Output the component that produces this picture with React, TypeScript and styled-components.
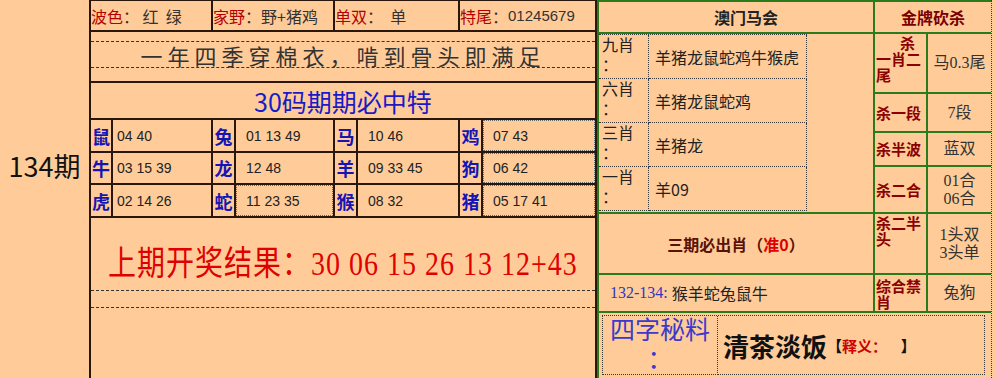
import React from "react";
import styled, { createGlobalStyle, css } from "styled-components";

// colours picked from the screenshot
const PEACH = "#ffcc99";
const LINE = "#2a160a";
const GREEN = "#2b7a1c";
const DOT = "#3a3a3a";

const GlobalStyle = createGlobalStyle`
  html, body {
    margin: 0;
    padding: 0;
    background: ${PEACH};
  }
  body {
    font-family: "Noto Sans CJK SC", "Liberation Sans", sans-serif;
  }
`;

const Page = styled.div`
  display: flex;
  width: 995px;
  height: 378px;
  overflow: hidden;
  background: ${PEACH};
`;

const IssueCol = styled.div`
  width: 89px;
  flex-shrink: 0;
  box-sizing: border-box;
  display: flex;
  align-items: center;
  justify-content: center;
  padding-bottom: 48px;
  font-size: 27px;
  color: #111;
`;

/* ---------- left table ---------- */

const LeftTable = styled.div`
  width: 508px;
  flex-shrink: 0;
  box-sizing: border-box;
  display: grid;
  grid-template-columns: 20px 98px 21px 97px 21px 100px 21px 112px;
  grid-template-rows: 29px 49px 35px 31px 30px 31px 1fr;
  gap: 2px;
  padding: 1px 2px 0 2px;
  background: ${LINE};
`;

const InfoCell = styled.div`
  grid-column: span 2;
  background: ${PEACH};
  display: flex;
  align-items: center;
  font-size: 16px;
  color: #333;
  white-space: pre;
`;

const InfoLabel = styled.span`
  color: #b30000;
`;

const Digits = styled.span`
  font-family: "Liberation Sans", sans-serif;
  font-size: 15px;
`;

const WideCell = styled.div`
  grid-column: 1 / -1;
  background: ${PEACH};
`;

const SloganBand = styled.div`
  margin-top: 9px;
  height: 25px;
  border-top: 1px dashed #333;
  border-bottom: 1px dashed #333;
  display: flex;
  align-items: center;
  justify-content: center;
  font-size: 22px;
  letter-spacing: 5px;
  color: #333;
`;

const TitleCell = styled(WideCell)`
  display: flex;
  align-items: center;
  justify-content: center;
  font-size: 25px;
  color: #1a1ac8;
`;

const Zodiac = styled.div`
  background: ${PEACH};
  display: flex;
  align-items: center;
  justify-content: center;
  font-size: 18px;
  font-weight: bold;
  color: #1515b5;
`;

const Nums = styled.div<{ $pad: number; $dotted?: boolean }>`
  background: ${PEACH};
  display: flex;
  align-items: center;
  padding-left: ${(p) => p.$pad}px;
  font-family: "Liberation Sans", sans-serif;
  font-size: 14px;
  color: #222;
  white-space: pre;
  ${(p) =>
    p.$dotted &&
    css`
      outline: 1px dotted #666;
      outline-offset: -1px;
    `}
`;

const ResultCell = styled(WideCell)`
  padding-top: 28px;
`;

const ResultText = styled.div`
  height: 36px;
  line-height: 36px;
  padding-left: 17px;
  font-family: "Liberation Serif", "Noto Sans CJK SC", serif;
  font-size: 28px;
  letter-spacing: 1px;
  color: #e00000;
  white-space: pre;
  transform: scaleY(1.2);
  transform-origin: left center;
`;

const DashedBand = styled.div`
  margin-top: 8px;
  height: 16px;
  border-top: 1px dashed #333;
  border-bottom: 1px dashed #333;
`;

/* ---------- right panel ---------- */

const RightWrap = styled.div`
  width: 395px;
  flex-shrink: 0;
  margin-right: 3px;
  box-sizing: border-box;
  border-right: 1px dotted ${DOT};
`;

const RightGrid = styled.div`
  height: 100%;
  box-sizing: border-box;
  display: grid;
  grid-template-columns: 274px 51px 63px;
  grid-template-rows: 30px 58px 37px 32px 45px 59px 36px 1fr;
  gap: 2px;
  padding: 2px 0 0 2px;
  background: ${GREEN};
`;

const Cell = styled.div`
  background: ${PEACH};
  display: flex;
  align-items: center;
`;

const MaHeader = styled(Cell)`
  justify-content: center;
  padding-left: 20px;
  font-size: 16px;
  font-weight: bold;
  color: #222;
`;

const GoldHeader = styled(Cell)`
  grid-column: span 2;
  justify-content: center;
  font-size: 16px;
  font-weight: bold;
  color: #7a0000;
`;

const ListBlock = styled.div`
  grid-row: span 4;
  background: ${PEACH};
`;

const ListGrid = styled.div`
  display: grid;
  grid-template-columns: 50px 158px;
  grid-template-rows: repeat(4, 44px);
  width: 208px;
  border-top: 1px dotted ${DOT};
`;

// latin font first so the two stacked lines keep tight boxes
const ListLabel = styled.div`
  box-sizing: border-box;
  border-right: 1px dotted ${DOT};
  border-bottom: 1px dotted ${DOT};
  padding: 1px 0 0 3px;
  font-family: "Liberation Sans", "Noto Sans CJK SC", sans-serif;
  font-size: 16px;
  line-height: 20px;
  color: #222;
`;

const ListValue = styled.div`
  box-sizing: border-box;
  border-right: 1px dotted ${DOT};
  border-bottom: 1px dotted ${DOT};
  display: flex;
  align-items: center;
  padding-left: 6px;
  font-size: 16px;
  color: #222;
`;

const KillLabel = styled.div<{ $top?: number; $indent?: number }>`
  background: ${PEACH};
  box-sizing: border-box;
  display: flex;
  align-items: ${(p) => (p.$top !== undefined ? "flex-start" : "center")};
  padding: ${(p) => p.$top ?? 0}px 0 0 1px;
  font-size: 15px;
  line-height: 16px;
  font-weight: bold;
  color: #8b0000;
  word-break: break-all;
  & > span {
    display: block;
    text-indent: ${(p) => p.$indent ?? 0}px;
  }
`;

const KillValue = styled(Cell)`
  justify-content: center;
  text-align: center;
  font-family: "Liberation Serif", "Noto Sans CJK SC", serif;
  font-size: 16px;
  line-height: 18px;
  color: #333;
`;

const SanqiCell = styled(Cell)`
  justify-content: center;
  font-size: 16px;
  font-weight: bold;
  color: #5a1208;
`;

const RedText = styled.span`
  color: #dd0000;
`;

const RangeCell = styled(Cell)`
  padding-left: 11px;
  font-size: 16px;
  color: #222;
`;

const RangeNum = styled.span`
  font-family: "Liberation Serif", serif;
  color: #3434bc;
  margin-right: 4px;
`;

const BottomCell = styled.div`
  grid-column: 1 / -1;
  background: ${PEACH};
  padding: 2px 6px 3px 3px;
  display: flex;
`;

const SecretTable = styled.div`
  flex: 1;
  display: flex;
  border-top: 1px dotted ${DOT};
  border-left: 1px dotted ${DOT};
`;

const SecretLabel = styled.div`
  width: 115px;
  box-sizing: border-box;
  border-right: 1px dotted ${DOT};
  border-bottom: 1px dotted ${DOT};
  text-align: center;
  font-family: "Liberation Serif", "Noto Sans CJK SC", serif;
  font-size: 25px;
  line-height: 29px;
  color: #3a3acc;
`;

const SecretValue = styled.div`
  flex: 1;
  box-sizing: border-box;
  border-right: 1px dotted ${DOT};
  border-bottom: 1px dotted ${DOT};
  display: flex;
  align-items: center;
  padding-left: 5px;
  white-space: pre;
`;

const Idiom = styled.span`
  font-size: 26px;
  font-weight: bold;
  color: #111;
`;

const Bracket = styled.span<{ $red?: boolean }>`
  font-size: 15px;
  font-weight: bold;
  color: ${(p) => (p.$red ? "#cc0000" : "#111")};
`;

const zodiacRows = [
  [
    { z: "鼠", n: "04 40" },
    { z: "兔", n: "01 13 49" },
    { z: "马", n: "10 46" },
    { z: "鸡", n: "07 43", dotted: true },
  ],
  [
    { z: "牛", n: "03 15 39" },
    { z: "龙", n: "12 48" },
    { z: "羊", n: "09 33 45" },
    { z: "狗", n: "06 42", dotted: true },
  ],
  [
    { z: "虎", n: "02 14 26" },
    { z: "蛇", n: "11 23 35", dotted: true },
    { z: "猴", n: "08 32" },
    { z: "猪", n: "05 17 41", dotted: true },
  ],
];

const picks = [
  { label: "九肖", value: "羊猪龙鼠蛇鸡牛猴虎" },
  { label: "六肖", value: "羊猪龙鼠蛇鸡" },
  { label: "三肖", value: "羊猪龙" },
  { label: "一肖", value: "羊09" },
];

export default function App() {
  return (
    <>
      <GlobalStyle />
      <Page>
        <IssueCol>134期</IssueCol>

        <LeftTable>
          <InfoCell>
            <InfoLabel>波色</InfoLabel>： 红  绿
          </InfoCell>
          <InfoCell>
            <InfoLabel>家野</InfoLabel>：野+猪鸡
          </InfoCell>
          <InfoCell>
            <InfoLabel>单双</InfoLabel>：  单
          </InfoCell>
          <InfoCell>
            <InfoLabel>特尾</InfoLabel>：<Digits>01245679</Digits>
          </InfoCell>

          <WideCell>
            <SloganBand>一年四季穿棉衣，啃到骨头即满足</SloganBand>
          </WideCell>

          <TitleCell>30码期期必中特</TitleCell>

          {zodiacRows.map((row) =>
            row.map((c, i) => (
              <React.Fragment key={c.z}>
                <Zodiac>{c.z}</Zodiac>
                <Nums $pad={i === 0 ? 4 : 10} $dotted={c.dotted}>
                  {c.n}
                </Nums>
              </React.Fragment>
            ))
          )}

          <ResultCell>
            <ResultText>上期开奖结果：30 06 15 26 13 12+43</ResultText>
            <DashedBand />
          </ResultCell>
        </LeftTable>

        <RightWrap>
          <RightGrid>
            <MaHeader>澳门马会</MaHeader>
            <GoldHeader>金牌砍杀</GoldHeader>

            <ListBlock>
              <ListGrid>
                {picks.map((p) => (
                  <React.Fragment key={p.label}>
                    <ListLabel>
                      {p.label}
                      <br />：
                    </ListLabel>
                    <ListValue>{p.value}</ListValue>
                  </React.Fragment>
                ))}
              </ListGrid>
            </ListBlock>
            <KillLabel $top={1} $indent={24}>
              <span>杀一肖二尾</span>
            </KillLabel>
            <KillValue>马0.3尾</KillValue>

            <KillLabel>杀一段</KillLabel>
            <KillValue>7段</KillValue>

            <KillLabel>杀半波</KillLabel>
            <KillValue>蓝双</KillValue>

            <KillLabel>杀二合</KillLabel>
            <KillValue>
              01合
              <br />
              06合
            </KillValue>

            <SanqiCell>
              三期必出肖（<RedText>准0</RedText>）
            </SanqiCell>
            <KillLabel $top={1}>
              <span>杀二半头</span>
            </KillLabel>
            <KillValue>
              1头双
              <br />
              3头单
            </KillValue>

            <RangeCell>
              <RangeNum>132-134:</RangeNum>猴羊蛇兔鼠牛
            </RangeCell>
            <KillLabel $top={3}>
              <span>综合禁肖</span>
            </KillLabel>
            <KillValue>兔狗</KillValue>

            <BottomCell>
              <SecretTable>
                <SecretLabel>
                  四字秘料
                  <br />：
                </SecretLabel>
                <SecretValue>
                  <Idiom>清茶淡饭</Idiom>
                  <Bracket>【</Bracket>
                  <Bracket $red>释义：</Bracket>
                  <Bracket>    】</Bracket>
                </SecretValue>
              </SecretTable>
            </BottomCell>
          </RightGrid>
        </RightWrap>
      </Page>
    </>
  );
}
